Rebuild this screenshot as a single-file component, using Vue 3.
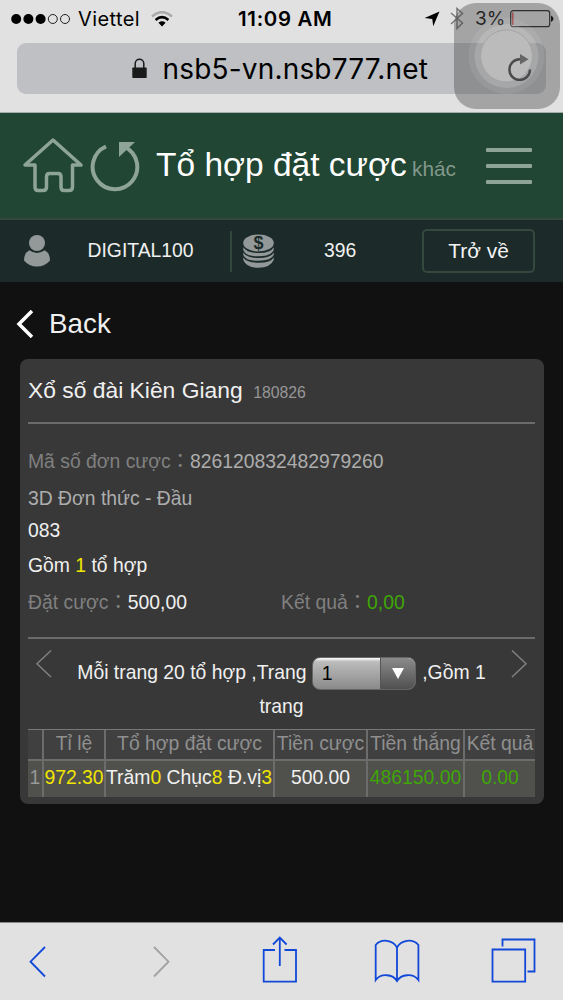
<script setup>
const bet = {
  lottery: 'Xổ số đài Kiên Giang',
  draw: '180826',
  ticket: '826120832482979260',
}
const headings = ['', 'Tỉ lệ', 'Tổ hợp đặt cược', 'Tiền cược', 'Tiền thắng', 'Kết quả']
const picks = [
  ['Trăm', '0'],
  [' Chục', '8'],
  [' Đ.vị', '3'],
]
</script>

<template>
  <div class="screen">
    <header class="browser">
      <div class="status">
        <svg class="dots" width="60" height="12" viewBox="0 0 60 12">
          <circle cx="5.2" cy="6" r="5" /><circle cx="17.4" cy="6" r="5" /><circle cx="29.6" cy="6" r="5" />
          <circle class="empty" cx="41.8" cy="6" r="4.5" /><circle class="empty" cx="54" cy="6" r="4.5" />
        </svg>
        <span class="carrier">Viettel</span>
        <svg class="wifi" width="22" height="16" viewBox="0 0 22 16">
          <path d="M1 5.4Q11-3 21 5.4" stroke="#aaa" /><path d="M4.6 8.9Q11 3.4 17.4 8.9" stroke="#000" />
          <path d="M7.4 11.8Q11 8.9 14.6 11.8L11 15.5Z" fill="#000" />
        </svg>
        <span class="clock">11:09 AM</span>
        <svg class="locate" width="16" height="16" viewBox="0 0 16 16"><path d="M15.5 0.5L9.2 15.3L8.3 8.1L0.6 7.1Z" /></svg>
        <svg class="bluetooth" width="14" height="23" viewBox="0 0 14 23"><path d="M1 6L12.5 16L7 21.5V1.5L12.5 6.5L1 17" /></svg>
        <span class="charge">3%</span>
        <svg class="battery" width="44" height="18" viewBox="0 0 44 18">
          <rect x=".7" y=".7" width="39" height="16" rx="2.5" fill="none" stroke="#222" stroke-width="1.2" />
          <path d="M2.8 2.5V15" stroke="#e04040" stroke-width="1.3" /><path d="M41 5.5Q46 8.7 41 12Z" fill="#000" />
        </svg>
      </div>
      <div class="address">
        <svg class="lock" width="15" height="21" viewBox="0 0 15 21">
          <path d="M3.2 10V5.5a4.3 4.3 0 0 1 8.6 0V10" fill="none" stroke="#1a1a1a" stroke-width="1.5" /><rect x=".3" y="9.5" width="14.4" height="10.5" rx=".8" fill="#1a1a1a" />
        </svg>
        <span class="url">nsb5-vn.nsb777.net</span>
      </div>
      <div class="touch">
        <svg width="106" height="106" viewBox="0 0 106 106">
          <circle cx="52.5" cy="53" r="38" fill="#fff" opacity=".08" />
          <circle cx="52.5" cy="53" r="32" fill="#fff" opacity=".15" />
          <circle cx="52.5" cy="53" r="26" fill="#bbb" stroke="#a5a5a5" stroke-width="1" />
          <path d="M66 56.3A10.3 10.3 0 1 0 76 66.5" fill="none" stroke="#4a4a4c" stroke-width="2.4" />
          <path d="M66 51L74.5 56.3L66 61.5Z" fill="#666" />
        </svg>
      </div>
    </header>

    <nav class="titlebar">
      <svg class="home" width="60" height="56" viewBox="0 0 60 56">
        <path d="M30 2L58 27H49.5V49Q49.5 52.5 46 52.5H41Q38 52.5 38 49V39Q38 35.5 35 35.5H26.5Q23.5 35.5 23.5 39V49Q23.5 52.5 20 52.5H15Q12 52.5 12 49V27H2Z" />
      </svg>
      <svg class="reload" width="50" height="52" viewBox="0 0 50 52">
        <path class="arc" d="M16 6.5A22.3 22.3 0 1 0 35 7" /><path class="tip" d="M29 2H45L29 17Z" />
      </svg>
      <h1>Tổ hợp đặt cược</h1>
      <small>khác</small>
      <div class="menu"><i /><i /><i /></div>
    </nav>

    <section class="account">
      <svg class="user" width="28" height="32" viewBox="0 0 28 32">
        <circle cx="14" cy="8" r="8" /><path d="M6.3 15.2Q14 20.6 21.7 15.2Q27 18 27 25.5Q22 31.5 14 31.5T1 25.5Q1 18 6.3 15.2Z" />
      </svg>
      <span class="name">DIGITAL100</span>
      <svg class="coins" width="32" height="35" viewBox="0 0 32 35">
        <ellipse cx="16" cy="9" rx="15.3" ry="8.5" />
        <path d="M.8 13.2Q4 18.8 16 19T31.2 13.2V16Q29 22 16 22.3T.8 16ZM.8 18.4Q4 23.8 16 24T31.2 18.4V21Q29 26.5 16 26.8T.8 21ZM.8 23.4Q4 28.5 16 28.7T31.2 23.4V26Q28 33.5 16 33.7T.8 26Z" />
        <text x="16" y="15">$</text>
      </svg>
      <span class="balance">396</span>
      <button class="return">Trở về</button>
    </section>

    <main>
      <div class="back">
        <svg width="18" height="28" viewBox="0 0 18 28"><path d="M16 1L3 14L16 27" /></svg>
        <span>Back</span>
      </div>

      <article class="card">
        <h2>{{ bet.lottery }}<small>{{ bet.draw }}</small></h2>
        <div class="details">
          <p class="ticket"><label>Mã số đơn cược：</label>{{ bet.ticket }}</p>
          <p class="kind">3D Đơn thức - Đầu</p>
          <p class="number">083</p>
          <p class="count">Gồm <b>1</b> tổ hợp</p>
          <p class="amounts">
            <span><label>Đặt cược：</label>500,00</span>
            <span class="win"><label>Kết quả：</label>0,00</span>
          </p>
        </div>
        <div class="pager">
          <svg width="18" height="30" viewBox="0 0 18 30"><path d="M16 1.5L2 14.8L16 28" /></svg>
          <div class="pages">
            Mỗi trang 20 tổ hợp ,Trang
            <span class="select"><span>1</span><i><svg width="12" height="11" viewBox="0 0 12 11"><path d="M0 0H12L6 11Z" fill="#fff" /></svg></i></span>
            ,Gồm 1 <br />trang
          </div>
          <svg width="18" height="30" viewBox="0 0 18 30"><path d="M2 1.5L16 14.8L2 28" /></svg>
        </div>
        <table>
          <colgroup><col class="c1" /><col class="c2" /><col class="c3" /><col class="c4" /><col class="c5" /><col class="c6" /></colgroup>
          <thead><tr><th v-for="(h, i) in headings" :key="i">{{ h }}</th></tr></thead>
          <tbody>
            <tr>
              <td class="index">1</td><td class="yellow">972.30</td>
              <td class="combo"><template v-for="p in picks" :key="p[0]">{{ p[0] }}<b>{{ p[1] }}</b></template></td>
              <td>500.00</td><td class="green">486150.00</td><td class="green">0.00</td>
            </tr>
          </tbody>
        </table>
      </article>
    </main>

    <footer>
      <svg width="18" height="32" viewBox="0 0 18 32"><path d="M16 1L1.5 15.7L16 30.5" /></svg>
      <svg class="off" width="18" height="32" viewBox="0 0 18 32"><path d="M2 1L16.5 15.7L2 30.5" /></svg>
      <svg class="share" width="36" height="48" viewBox="0 0 36 48"><path d="M13 14H1.7V45.7H34V14H22.5M17.8 30V1.5M11 8.5L17.8 1.5L24.6 8.5" /></svg>
      <svg class="book" width="46" height="44" viewBox="0 0 46 44"><path d="M23 8.5C19 .5 7-.5 1.7 6V41C7 34 19 35 23 42C27 35 39 34 44.4 41V6C39-.5 27 .5 23 8.5V42" /></svg>
      <svg class="tabs" width="45" height="45" viewBox="0 0 45 45"><path d="M1.5 11.5H34.2V43.7H1.5ZM11.5 8.5V1.5H43.5V33.5H36.5" /></svg>
    </footer>
  </div>
</template>

<style scoped>
* { box-sizing: border-box; }
.screen {
  width: 563px; height: 1000px; display: flex; flex-direction: column; overflow: hidden;
  background: #111; color: #f0f0f0;
  font: 19.35px/24px "Liberation Sans", "Noto Sans CJK TC", sans-serif;
}
svg { display: block; flex: none; }
h1, h2, p { margin: 0; font-weight: 400; }
b { font-weight: 400; color: #f0e500; }

.browser { position: relative; height: 113px; flex: none; background: #e1e1e1; border-bottom: 1px solid #a4aeaa; color: #000; font-family: Inter, Roboto, sans-serif; }
.status { height: 37px; display: flex; align-items: center; padding-left: 11px; white-space: nowrap; }
.empty { fill: none; stroke: #222; stroke-width: 1; }
.carrier { width: 66px; margin-left: 7px; font-size: 20px; letter-spacing: .4px; }
.wifi { margin-left: 7px; fill: none; stroke-width: 2.6; }
.clock { width: 96px; margin-left: 65px; font-size: 20.4px; letter-spacing: .7px; font-weight: 600; }
.locate { margin-left: 90px; }
.bluetooth { margin-left: 10px; fill: none; stroke: #777; stroke-width: 1.5; }
.charge { width: 29px; margin-left: 11px; font-size: 19px; color: #111; }
.battery { margin-left: 6px; }
.address { display: flex; align-items: center; width: 529px; height: 51px; margin: 6px 0 0 17px; padding-left: 115px; border-radius: 9px; background: #bec0c4; }
.url { margin-left: 15.5px; font-size: 28px; letter-spacing: .18px; white-space: nowrap; }
.touch { position: absolute; left: 454px; top: 3px; width: 106px; height: 106px; border-radius: 22px; background: rgba(65, 65, 65, .38); }

.titlebar { height: 107px; flex: none; display: flex; align-items: center; padding-left: 23px; background: #214633; border-bottom: 2px solid #34483d; }
.home { margin-top: 1px; fill: none; stroke: #8fa499; stroke-width: 3.5; stroke-linejoin: round; }
.reload { margin-left: 7px; }
.arc { fill: none; stroke: #8fa499; stroke-width: 4; }
.tip { fill: #8fa499; }
h1 { width: 255px; margin: -2px 0 0 16px; font-size: 33.5px; line-height: 40px; color: #fff; white-space: nowrap; }
.titlebar small { width: 74px; margin: 6px 0 0 1px; font-size: 20.8px; color: #82988c; }
.menu { height: 36px; width: 46px; display: flex; flex-direction: column; justify-content: space-between; }
.menu i { height: 4px; border-radius: 1px; background: #8fa499; }

.account { height: 62px; flex: none; display: flex; align-items: center; padding-left: 23px; background: #1c2b29; }
.user, .coins { fill: #929998; }
.name { width: 142px; margin-left: 36.5px; padding-bottom: 2px; }
.coins { box-sizing: content-box; padding: 3px 0 3px 10.5px; border-left: 2px solid #34473d; }
.coins text { fill: #1c2b29; font: bold 18px "Liberation Sans", sans-serif; text-anchor: middle; }
.balance { width: 98px; margin-left: 50px; padding-bottom: 2px; }
.return { width: 113px; height: 44px; padding: 0; border: 2px solid #34483d; border-radius: 5px; background: none; color: #f4f4f4; font: 20.9px "Liberation Sans", sans-serif; }

main { flex: 1; }
.back { height: 77px; padding: 7px 0 0 15.5px; display: flex; align-items: center; font-size: 27.8px; }
.back svg { fill: none; stroke: #fff; stroke-width: 3.5; }
.back span { margin-left: 15.5px; }
.card { width: 524px; height: 445px; margin-left: 19.5px; padding: 0 8.5px; border-radius: 8px; background: #383838; }
h2 { height: 65px; padding-top: 2px; border-bottom: 2px solid #6b6b6b; font-size: 22.85px; line-height: 58px; white-space: nowrap; }
h2 small { margin-left: 10.5px; font-size: 15.8px; color: #969696; }
.details { height: 215px; padding-top: 25px; border-bottom: 2px solid #6b6b6b; }
.details p { white-space: nowrap; }
.details .ticket, .details .kind { color: #adadad; }
.details label { color: #808080; }
.kind { padding-top: 13px; }
.number { padding-top: 8px; }
.count { padding-top: 11px; }
.amounts { display: grid; grid-template-columns: 253px 1fr; padding-top: 13px; }
.win, .green { color: #3fa606; }
.pager { height: 90px; padding: 0 7px; display: flex; justify-content: space-between; }
.pager > svg { margin-top: 10px; fill: none; stroke: #808080; stroke-width: 1.5; }
.pages { padding-top: 17px; text-align: center; white-space: nowrap; line-height: 33px; }
.select { display: inline-flex; width: 104px; height: 33px; margin-right: 1px; overflow: hidden; vertical-align: middle; border: 1px solid #656565; border-radius: 8px; line-height: 30px; background: linear-gradient(#fff, #bcbcbc 12%, #8a8a8a); color: #000; text-align: left; }
.select span { width: 67px; padding-left: 9px; }
.select i { flex: 1; display: grid; place-items: center; border-left: 1px solid #555; background: linear-gradient(#8b8b8b, #505050); }
table { width: 507px; table-layout: fixed; border-collapse: separate; border-spacing: 0; border-top: 1px solid #777; }
.c1 { width: 14px; } .c2 { width: 62px; } .c3 { width: 169px; } .c4 { width: 93px; } .c5 { width: 97px; } .c6 { width: 72px; }
th, td { padding: 0 0 4px 0; border-left: 2px solid #6c6c6c; text-align: center; font-weight: 400; white-space: nowrap; }
th:first-child, td:first-child { border-left: 0; }
th { height: 31px; border-bottom: 2px solid #6c6c6c; background: #404040; color: #8f8f8f; }
td { height: 36px; background: #50504d; }
.index { color: #989898; }
.yellow { color: #f0e500; }
.combo { padding-right: 1px; white-space: pre; }

footer { height: 78px; flex: none; display: flex; align-items: center; padding-left: 29px; border-top: 1px solid #888; background: #e1e1e1; }
footer svg { fill: none; stroke: #1248d8; stroke-width: 1.8; }
footer .off { margin-left: 105px; stroke: #a1a1a1; }
footer .share { margin: -3px 0 0 92px; }
footer .book { margin: -1px 0 0 76px; }
footer .tabs { margin: -2px 0 0 70.5px; }
</style>
